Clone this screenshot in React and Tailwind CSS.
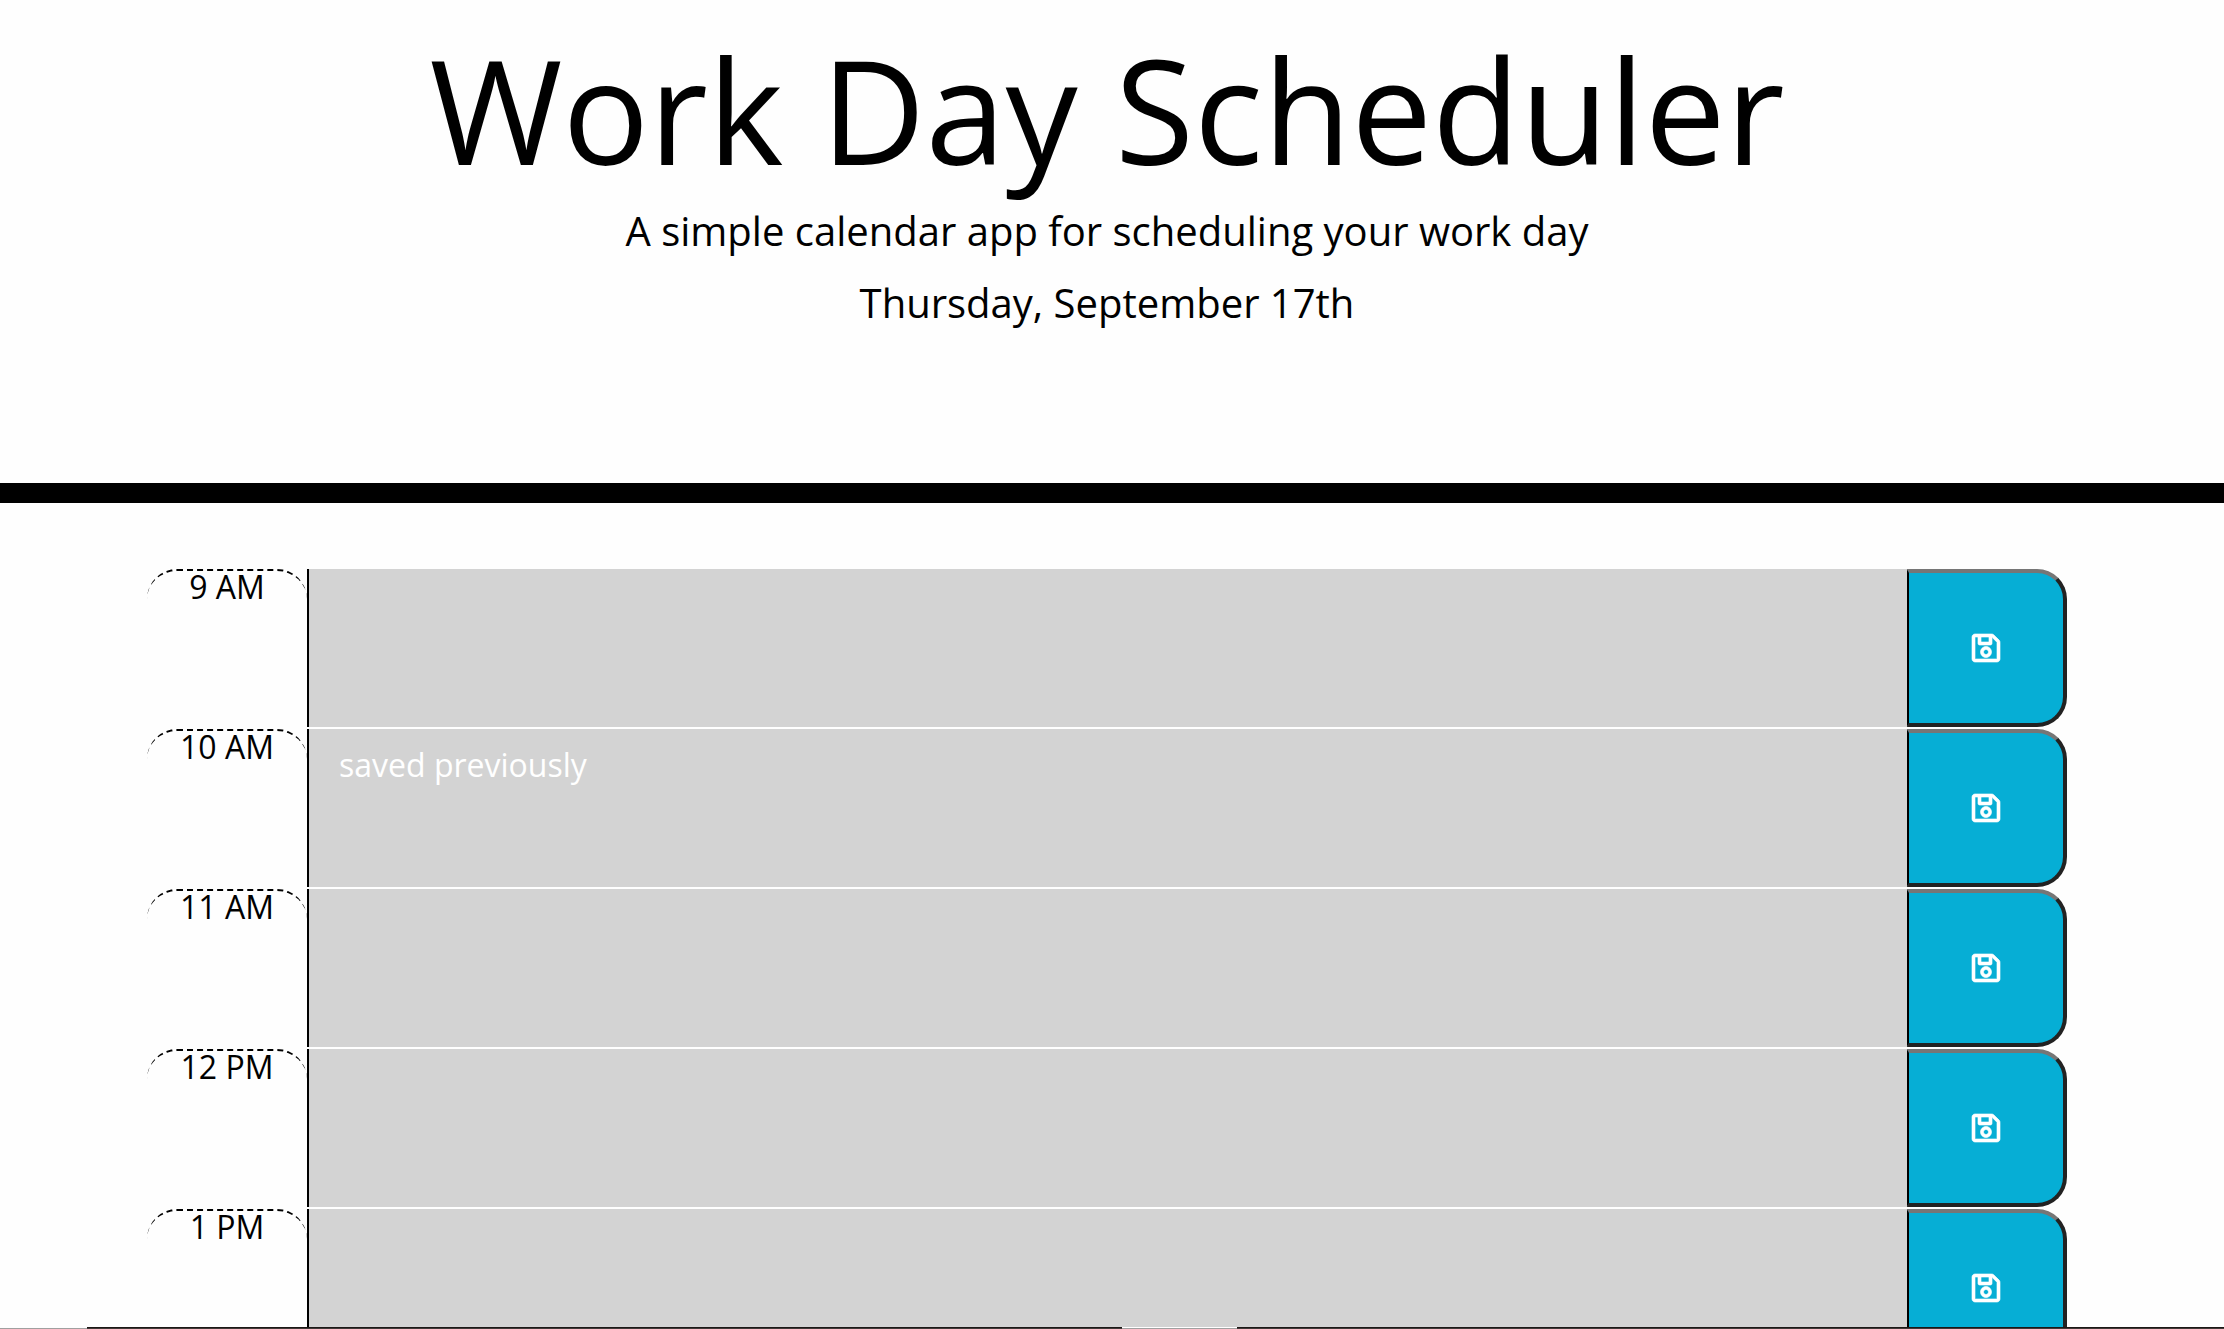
import { FaRegSave } from "react-icons/fa";

const hours = [
  { label: "9 AM", note: "" },
  { label: "10 AM", note: "saved previously" },
  { label: "11 AM", note: "" },
  { label: "12 PM", note: "" },
  { label: "1 PM", note: "" },
];

function TimeBlock({ label, note }) {
  const id = "hour-" + label.replace(" ", "-");
  return (
    <div className="grid h-[158px] shrink-0 grid-cols-12">
      <label
        htmlFor={id}
        className="rounded-[30px] border-t-2 border-dashed border-black text-center text-[32px] leading-8"
      >
        {label}
      </label>
      <textarea
        id={id}
        defaultValue={note}
        className="col-span-10 block resize-none border-l-2 border-black bg-[#d3d3d3] px-[30px] py-3 text-[32px] leading-[48px] text-white outline-none"
      />
      <button
        type="button"
        aria-label={"Save " + label}
        className="flex items-center justify-center rounded-r-[30px] border-4 border-l-2 border-[#222222] border-t-[#767676] border-l-black bg-[#06aed5] text-[32px] text-white"
      >
        <FaRegSave className="w-7 overflow-visible stroke-white stroke-[10]" />
      </button>
    </div>
  );
}

export default function App() {
  return (
    <div className="flex h-screen flex-col overflow-hidden bg-[#fefefe] font-['Open_Sans',sans-serif] text-black">
      <header className="shrink-0 border-b-[20px] border-black pt-[37px] pr-[10px] pb-[150px] text-center">
        <h1 className="text-[144px] leading-[144px]">Work Day Scheduler</h1>
        <p className="mt-5 text-[40px] leading-[60px]">
          A simple calendar app for scheduling your work day
        </p>
        <p className="mt-3 text-[40px] leading-[60px]">Thursday, September 17th</p>
      </header>
      <main className="min-h-0 flex-1 overflow-hidden pt-[66px] pr-[10px]">
        <div className="mx-auto flex max-w-[1920px] flex-col gap-0.5">
          {hours.map((hour) => (
            <TimeBlock key={hour.label} {...hour} />
          ))}
        </div>
      </main>
      <footer className="flex h-0.5 shrink-0">
        <div className="w-[87px] border-b border-[#a0a0a0]" />
        <div className="w-[1035px] border-b border-[#403a38] bg-[#1c1716]" />
        <div className="w-[115px] border-b border-[#a0a0a0] bg-white" />
        <div className="flex-1 border-b border-[#403a38] bg-[#1c1716]" />
      </footer>
    </div>
  );
}
